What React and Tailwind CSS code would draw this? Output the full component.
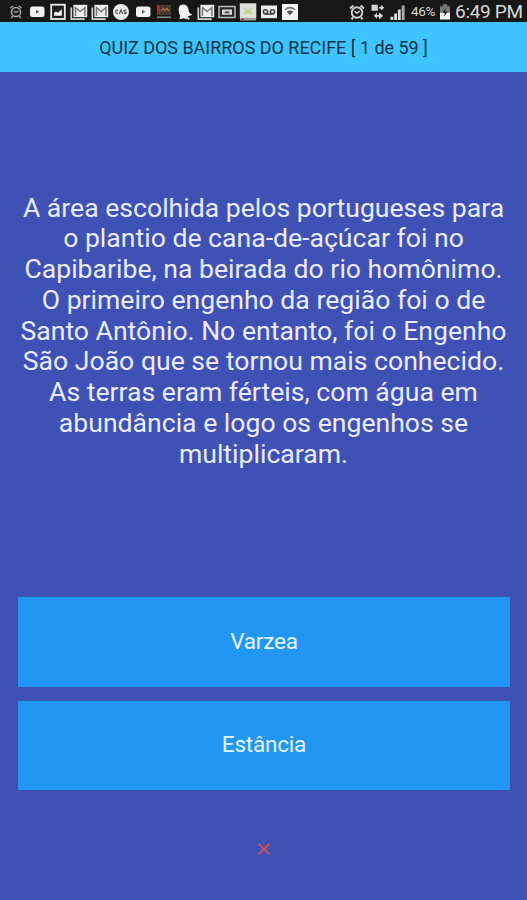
import React from "react";

const QUESTION_LINES = [
  "A área escolhida pelos portugueses para",
  "o plantio de cana-de-açúcar foi no",
  "Capibaribe, na beirada do rio homônimo.",
  "O primeiro engenho da região foi o de",
  "Santo Antônio. No entanto, foi o Engenho",
  "São João que se tornou mais conhecido.",
  "As terras eram férteis, com água em",
  "abundância e logo os engenhos se",
  "multiplicaram.",
];

const ANSWERS = ["Varzea", "Estância"];

const Icon = ({ children }) => (
  <svg viewBox="0 0 18 18" className="w-[18px] h-[18px] block shrink-0" fill="none">
    {children}
  </svg>
);

const AlarmIcon = ({ color = "#d0d0d0" }) => (
  <Icon>
    <circle cx="9" cy="9.5" r="5.3" stroke={color} strokeWidth="1.9" />
    <path d="M2 5.4 5.4 2.4M12.6 2.4 16 5.4M5 14.2 3.5 16.4M13 14.2l1.5 2.2" stroke={color} strokeWidth="2" />
    <path d="m6.5 8 2.5 2.2 2.8-2.2" stroke={color} strokeWidth="1.5" />
  </Icon>
);

const SmallAlarmIcon = () => (
  <Icon>
    <circle cx="9" cy="9" r="4.6" stroke="#a9a9a9" strokeWidth="1.5" />
    <path d="M3.5 5 6 3M12 3l2.5 2M5.7 13l-1.5 2M12.3 13l1.5 2" stroke="#a9a9a9" strokeWidth="1.4" />
    <path d="m6.8 8 2.2 1.6L11.4 8" stroke="#a9a9a9" strokeWidth="1.2" />
  </Icon>
);

const VideoIcon = () => (
  <Icon>
    <rect x="2" y="3.5" width="14.5" height="10.5" rx="2.5" fill="#f2f2f2" />
    <path d="m8 6.7 3.2 2-3.2 2.1z" fill="#555" />
  </Icon>
);

const PictureIcon = () => (
  <Icon>
    <rect x="2.2" y="1.7" width="13.6" height="14.3" fill="#1d1d1d" stroke="#ededed" strokeWidth="1.8" />
    <path d="M5 12.8V9.8l2-1.3 2.2 1.3L12.8 6v6.8z" fill="#f3f3f3" />
  </Icon>
);

const MailIcon = () => (
  <Icon>
    <path d="M1.3 4.5v11.6h13.4" stroke="#d5d5d5" strokeWidth="1.7" />
    <path d="M3.4 1.8h13.8v12.4H3.4z" fill="#eee" />
    <path d="M5.5 13V4.5l4.7 4 4.7-4V13" stroke="#777" strokeWidth="1.5" />
  </Icon>
);

const MeterIcon = () => (
  <Icon>
    <circle cx="9" cy="9" r="8" fill="#ececec" />
    <path d="M6.2 7.2c-3-1-3.4 3.6-.3 3.2M7.3 11l1.8-4.2L10.6 11M14.2 7.3c-2.8-.7-2.8 1.5-.9 1.8s1 2-1.5 1.2" stroke="#555" strokeWidth="1.2" />
  </Icon>
);

const BookIcon = () => (
  <Icon>
    <path d="M2 2h14v10H2z" fill="#493832" />
    <path d="M2 2.5h3V11H2z" fill="#8e3428" />
    <path d="m6 8 2-3 2 2.5 2-2 2 2.5" stroke="#987246" strokeWidth="1.3" />
    <path d="M2 14.3h14" stroke="#8a8a8a" strokeWidth="1.6" />
  </Icon>
);

const BellIcon = () => (
  <Icon>
    <path d="M4.2 2.3c3.6-2 7.4-.3 8.2 3.6l.7 3.5 3.2 2.4-5.2 2-.3 2.5-3.2-1.1-4.2 1.1.8-3.6C2.5 9.2 1.8 4.7 4.2 2.3z" fill="#f4f4f4" />
    <path d="m10.5 13.5 2.5 2.8" stroke="#d6d6d6" strokeWidth="2" />
  </Icon>
);

const CassetteIcon = () => (
  <Icon>
    <rect x="1" y="3.5" width="16" height="11" stroke="#bcbcbc" strokeWidth="1.5" fill="#282828" />
    <rect x="4" y="6.5" width="10" height="5.3" fill="#d7d7d7" />
    <path d="m6 10.2 1.8-2h2.4l1.8 2z" fill="#444" />
  </Icon>
);

const ThumbnailIcon = () => (
  <Icon>
    <path d="M.8.3h16.5v15.3H.8z" fill="#dededa" />
    <path d="M4.6 10.8C5 5.5 13 5.5 13.5 10.8z" fill="#b8d27f" />
    <path d="m6 5.3 1.2 2M12.2 5.3l-1.2 2" stroke="#b8d27f" strokeWidth="1" />
    <path d="M1 16.6h16" stroke="#a7a7a7" strokeWidth="1.7" />
    <path d="M2 16.6h3" stroke="#c42d27" strokeWidth="1.8" />
  </Icon>
);

const VoicemailIcon = () => (
  <Icon>
    <path d="M1 2.5h16v12.7H1z" fill="#ebebeb" />
    <circle cx="5.5" cy="8.8" r="2.1" stroke="#444" strokeWidth="1.6" />
    <circle cx="12.5" cy="8.8" r="2.1" stroke="#444" strokeWidth="1.6" />
    <path d="M5.5 11.2h7" stroke="#444" strokeWidth="1.4" />
  </Icon>
);

const WifiIcon = () => (
  <Icon>
    <path d="M1 1h16v16H1z" fill="#f4f4f4" />
    <path d="M4 6.8c3-2.6 7-2.6 10 0" stroke="#777" strokeWidth="1.5" />
    <path d="M5.7 8.6c2-1.6 4.6-1.6 6.6 0L9 12.3z" fill="#555" />
  </Icon>
);

const DataIcon = () => (
  <Icon>
    <path d="M2.5 1.8h6.3v6H2.5zM10.2 3.8h1.8V2l3.3 2.8L12 7.4V5.7h-1.8z" fill="#d4d4d4" />
    <path d="m4.8 12.8 3.2-3v2.1h2v-2.6l4.2 3.5-4.2 3.6v-2.6H8v2z" fill="#d4d4d4" />
  </Icon>
);

const SignalIcon = () => (
  <Icon>
    <path d="M1.5 13.7h2.8V17H1.5zM5.2 10.5H8V17H5.2zM8.9 6.5h2.8V17H8.9z" fill="#dcdcdc" />
    <path d="M12.7 2.5h2.9V17h-2.9z" fill="#a8a8a8" />
  </Icon>
);

const BatteryIcon = () => (
  <svg viewBox="0 0 12 18" className="w-3 h-[18px] block shrink-0" fill="none">
    <path d="M3.8 1.2h4.4v2h2.8v13.2H1V3.2h2.8z" fill="#777" />
    <path d="M1 9.7h10v6.7H1z" fill="#f2f2f2" />
    <path d="M6.8 4.5 3.5 10h2.3l-.7 3.7L8.7 8.5H6.2z" fill="#222" />
  </svg>
);

const NOTIFICATIONS = [
  SmallAlarmIcon,
  VideoIcon,
  PictureIcon,
  MailIcon,
  MailIcon,
  MeterIcon,
  VideoIcon,
  BookIcon,
  BellIcon,
  MailIcon,
  CassetteIcon,
  ThumbnailIcon,
  VoicemailIcon,
  WifiIcon,
];

const StatusBar = () => (
  <div className="h-[22px] shrink-0 bg-[#171717] flex items-center justify-between pl-[7px] pr-1 pt-px text-[#d8d8d8] whitespace-nowrap">
    <div className="flex gap-[3.1px]">
      {NOTIFICATIONS.map((NotificationIcon, index) => (
        <NotificationIcon key={index} />
      ))}
    </div>
    <div className="flex items-center">
      <AlarmIcon />
      <div className="ml-[3px]">
        <DataIcon />
      </div>
      <div className="ml-[2px]">
        <SignalIcon />
      </div>
      <span className="ml-1 w-[28px] text-[13.5px] leading-none tracking-[-0.3px]">46%</span>
      <BatteryIcon />
      <span className="ml-1 w-[68px] text-[19px] leading-none tracking-[-0.3px]">6:49 PM</span>
    </div>
  </div>
);

const App = () => {
  return (
    <div className="h-[900px] w-full flex flex-col overflow-hidden bg-[#3f51b5] font-['Roboto','Liberation_Sans',sans-serif]">
      <StatusBar />
      <header className="h-[50px] shrink-0 bg-[#40c4ff] flex items-center justify-center text-[18px] text-[#0d3447] tracking-[-0.03px] whitespace-nowrap">
        QUIZ DOS BAIRROS DO RECIFE [ 1 de 59 ]
      </header>

      <main className="flex-1 flex flex-col px-[18px] pb-[43px]">
        <p className="flex-1 flex flex-col justify-center pb-[7px] text-center text-[26.6px] leading-[30.75px] text-[#e9ecfa] whitespace-nowrap">
          {QUESTION_LINES.map((line) => (
            <span key={line}>{line}</span>
          ))}
        </p>

        <div className="flex flex-col gap-[14px] mr-[-1px]">
          {ANSWERS.map((answer) => (
            <button
              key={answer}
              className="h-[89.5px] bg-[#2196f3] text-[#e6f4ff] text-[22.5px] tracking-[-0.2px]"
            >
              {answer}
            </button>
          ))}
        </div>

        <button className="mt-[51px] self-center" aria-label="Fechar">
          <svg viewBox="0 0 16 16" className="w-4 h-4 block" fill="none">
            <path d="m2.5 2.5 11 11m0-11-11 11" stroke="#e5533f" strokeWidth="1.7" />
          </svg>
        </button>
      </main>
    </div>
  );
};

export default App;
